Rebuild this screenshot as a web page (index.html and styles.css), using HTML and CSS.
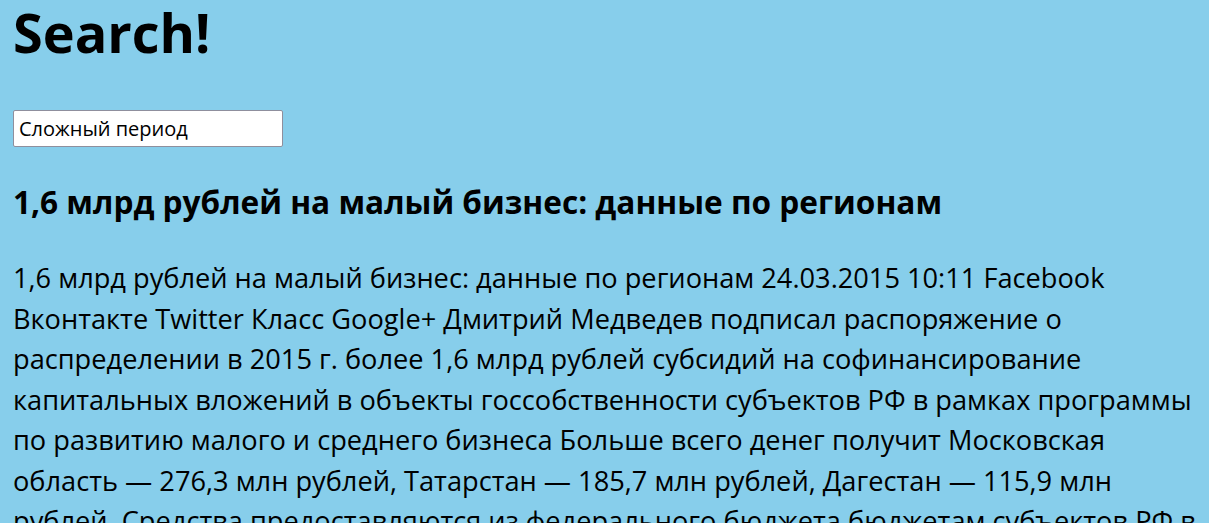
FILE: index.html
```html
<!DOCTYPE html>
<html lang="ru">
<head>
<meta charset="utf-8">
<title>Search!</title>
<link rel="stylesheet" href="styles.css">
</head>
<body>
<div class="page">
  <h1 class="title">Search!</h1>
  <input class="search" type="text" value="Сложный период">
  <h2 class="result-title">1,6 млрд рублей на малый бизнес: данные по регионам</h2>
  <p class="result-text">1,6 млрд рублей на малый бизнес: данные по регионам 24.03.2015 10:11 Facebook Вконтакте Twitter Класс Google+ Дмитрий Медведев подписал распоряжение о распределении в 2015 г. более 1,6 млрд рублей субсидий на софинансирование капитальных вложений в объекты госсобственности субъектов РФ в рамках программы по развитию малого и среднего бизнеса Больше всего денег получит Московская область — 276,3 млн рублей, Татарстан — 185,7 млн рублей, Дагестан — 115,9 млн рублей. Средства предоставляются из федерального бюджета бюджетам субъектов РФ в целях софинансирования расходных обязательств.</p>
</div>
</body>
</html>
```
FILE: styles.css
```css
html, body {
  margin: 0;
  padding: 0;
  background: #87ceeb;
}
.page {
  padding: 0 13px;
  font-family: "Open Sans", "Noto Sans", sans-serif;
  color: #000;
}
.title {
  margin: 0;
  font-size: 54px;
  font-weight: 700;
  line-height: 64px;
}
.search {
  display: block;
  margin: 46px 0 0 0;
  width: 270px;
  height: 37px;
  box-sizing: border-box;
  padding: 2px 5px;
  font-family: "Open Sans", sans-serif;
  font-size: 20px;
  border: 1px solid #8f8f9d;
  border-radius: 2px;
  background: #fff;
  color: #000;
}
.result-title {
  margin: 35px 0 0 0;
  font-size: 31.6px;
  font-weight: 700;
  line-height: 40px;
}
.result-text {
  margin: 36px 0 0 0;
  font-size: 27.2px;
  line-height: 40.5px;
}
```
